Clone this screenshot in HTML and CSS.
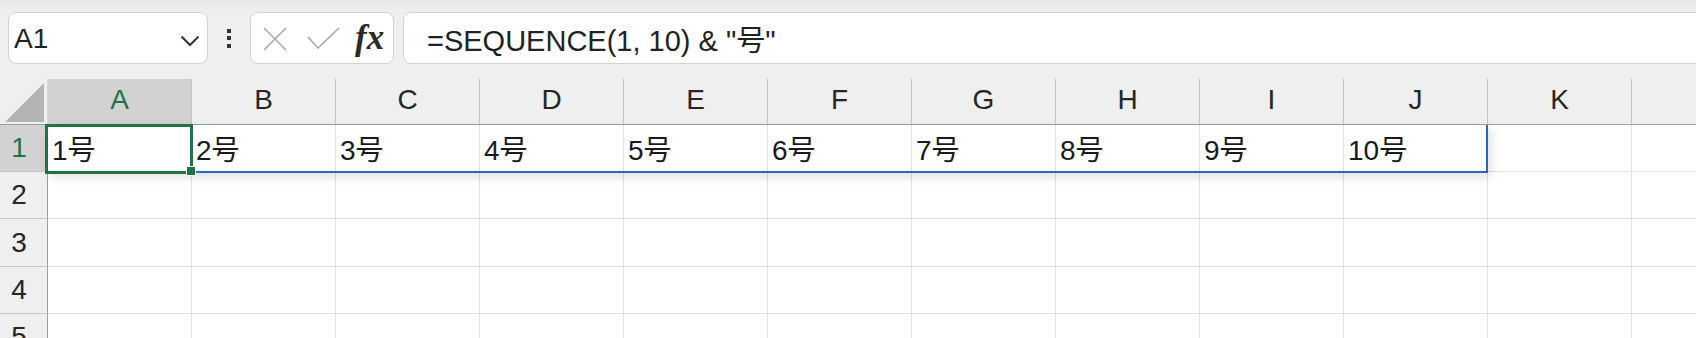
FILE: index.html
```html
<!DOCTYPE html>
<html lang="ja">
<head>
<meta charset="utf-8">
<title>Excel</title>
<link rel="stylesheet" href="styles.css">
</head>
<body>
<div class="app">
  <div class="fbar">
    <div class="namebox">
      <span class="ref">A1</span>
      <svg class="chev" width="20" height="12" viewBox="0 0 20 12"><polyline points="1.5,1.5 10,10 18.5,1.5" fill="none" stroke="#333" stroke-width="2"/></svg>
    </div>
    <div class="kebab"><i></i><i></i><i></i></div>
    <div class="fxbox">
      <svg class="ic-x" width="24" height="24" viewBox="0 0 24 24"><path d="M1 1 L23 23 M23 1 L1 23" stroke="#a8a8a8" stroke-width="1.6" fill="none"/></svg>
      <svg class="ic-ok" width="33" height="22" viewBox="0 0 33 22"><polyline points="1,10 11,21 32,1" fill="none" stroke="#a8a8a8" stroke-width="1.6"/></svg>
      <span class="fx">fx</span>
    </div>
    <div class="formula">=SEQUENCE(1, 10) &amp; "号"</div>
  </div>
  <div class="sheet">
    <div class="corner"><svg width="48" height="46" viewBox="0 0 48 46"><polygon points="44,4 44,43 5,43" fill="#b4b4b4"/></svg></div>
    <div class="ch sel">A</div><div class="ch">B</div><div class="ch">C</div><div class="ch">D</div><div class="ch">E</div><div class="ch">F</div><div class="ch">G</div><div class="ch">H</div><div class="ch">I</div><div class="ch">J</div><div class="ch">K</div><div class="ch"></div>

    <div class="rh sel">1</div>
    <div class="c">1号</div><div class="c">2号</div><div class="c">3号</div><div class="c">4号</div><div class="c">5号</div><div class="c">6号</div><div class="c">7号</div><div class="c">8号</div><div class="c">9号</div><div class="c">10号</div><div class="c"></div><div class="c"></div>

    <div class="rh">2</div>
    <div class="c"></div><div class="c"></div><div class="c"></div><div class="c"></div><div class="c"></div><div class="c"></div><div class="c"></div><div class="c"></div><div class="c"></div><div class="c"></div><div class="c"></div><div class="c"></div>

    <div class="rh">3</div>
    <div class="c"></div><div class="c"></div><div class="c"></div><div class="c"></div><div class="c"></div><div class="c"></div><div class="c"></div><div class="c"></div><div class="c"></div><div class="c"></div><div class="c"></div><div class="c"></div>

    <div class="rh">4</div>
    <div class="c"></div><div class="c"></div><div class="c"></div><div class="c"></div><div class="c"></div><div class="c"></div><div class="c"></div><div class="c"></div><div class="c"></div><div class="c"></div><div class="c"></div><div class="c"></div>

    <div class="rh">5</div>
    <div class="c"></div><div class="c"></div><div class="c"></div><div class="c"></div><div class="c"></div><div class="c"></div><div class="c"></div><div class="c"></div><div class="c"></div><div class="c"></div><div class="c"></div><div class="c"></div>

    <div class="spill"></div>
    <div class="selbox"></div>
    <div class="handle"></div>
  </div>
</div>
</body>
</html>
```

FILE: styles.css
```css
html, body {
  margin: 0;
  padding: 0;
  background: #efefef;
  overflow: hidden;
}
.app {
  width: 1696px;
  height: 338px;
  overflow: hidden;
  font-family: "Liberation Sans", "Noto Sans CJK JP", sans-serif;
  color: #1e1e1e;
}
.fbar {
  height: 79px;
  box-sizing: border-box;
  padding: 12px 0 15px 8px;
  display: flex;
  align-items: stretch;
  background: linear-gradient(#e7e7e7 0px, #eeeeee 10px, #efefef 12px);
}
.namebox, .fxbox, .formula {
  background: #fff;
  border: 1px solid #d2d2d2;
  border-radius: 8px;
  box-sizing: border-box;
  display: flex;
  align-items: center;
}
.namebox {
  width: 200px;
  flex: none;
  padding-left: 5px;
  padding-right: 7px;
}
.ref {
  font-size: 28px;
  flex: 1;
  color: #222;
  position: relative;
  top: 1px;
}
.chev {
  display: block;
  margin-top: 5px;
}
.kebab {
  width: 42px;
  flex: none;
  display: flex;
  flex-direction: column;
  align-items: center;
  justify-content: center;
  gap: 3.5px;
  padding-right: 1px;
  box-sizing: border-box;
}
.kebab i {
  display: block;
  width: 4px;
  height: 4px;
  background: #333;
}
.fxbox {
  width: 144px;
  flex: none;
  padding-left: 12px;
}
.ic-x { display: block; margin-top: 1px; }
.ic-ok { display: block; margin-left: 20px; margin-top: -1px; }
.fx {
  font-family: "Liberation Serif", "DejaVu Serif", serif;
  font-style: italic;
  font-weight: bold;
  font-size: 35px;
  color: #2a2a2a;
  margin-left: 15px;
  line-height: 1;
  position: relative;
  top: -1px;
}
.formula {
  margin-left: 9px;
  flex: none;
  width: 1320px;
  padding-left: 23px;
  font-size: 29px;
  color: #222;
}
.sheet {
  position: relative;
  display: grid;
  grid-template-columns: 48px repeat(12, 144px);
  grid-template-rows: 46px 47px 47px 48px 47px 47px;
  background: #fff;
}
.corner {
  background: #efefef;
  border-bottom: 1px solid #9e9e9e;
  border-right: 1px solid #d6d6d6;
  box-sizing: border-box;
}
.corner svg { display: block; }
.ch {
  background: #efefef;
  border-right: 1px solid #c2c2c2;
  border-bottom: 1px solid #9e9e9e;
  box-sizing: border-box;
  display: flex;
  align-items: center;
  justify-content: center;
  font-size: 28px;
  color: #262626;
  padding-bottom: 3px;
}
.rh {
  background: #efefef;
  border-right: 1px solid #9e9e9e;
  border-bottom: 1px solid #c6c6c6;
  box-sizing: border-box;
  display: flex;
  align-items: center;
  justify-content: center;
  padding-right: 9px;
  font-size: 28px;
  color: #262626;
}
.sel {
  background: #d2d2d2;
  color: #217346;
}
.c {
  border-right: 1px solid #e1e1e1;
  border-bottom: 1px solid #e1e1e1;
  box-sizing: border-box;
  display: flex;
  align-items: center;
  padding-left: 4px;
  font-size: 28px;
  color: #1a1a1a;
  white-space: nowrap;
}
.spill {
  position: absolute;
  left: 48px;
  top: 46px;
  width: 1440px;
  height: 48px;
  box-sizing: border-box;
  border-right: 2px solid #2f63c4;
  border-bottom: 2px solid #2f63c4;
  box-shadow: 3px 4px 10px rgba(0, 0, 0, 0.13);
}
.selbox {
  position: absolute;
  left: 45px;
  top: 45px;
  width: 148px;
  height: 50px;
  box-sizing: border-box;
  border: 3px solid #217346;
}
.handle {
  position: absolute;
  left: 186px;
  top: 87px;
  width: 10px;
  height: 10px;
  box-sizing: border-box;
  background: #217346;
  border: 1px solid #fff;
}
```
